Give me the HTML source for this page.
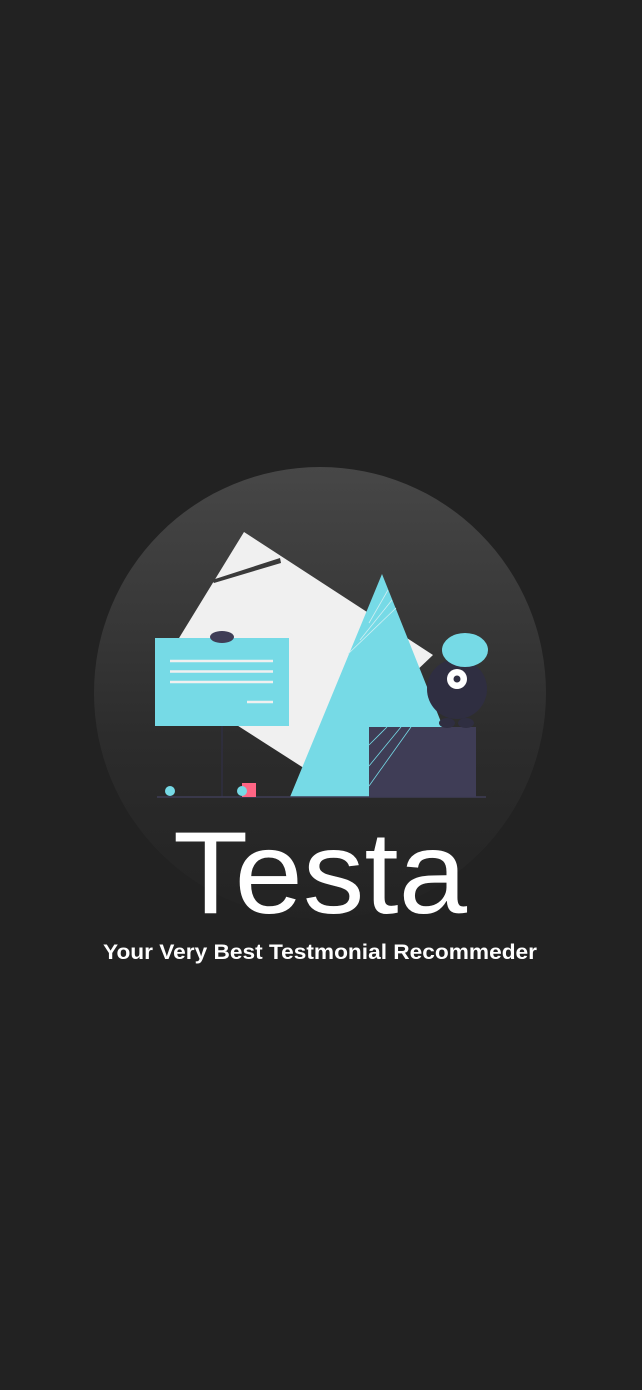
<!DOCTYPE html>
<html><head><meta charset="utf-8"><style>
html,body{margin:0;padding:0;background:#222222;}
body{width:642px;height:1390px;overflow:hidden;position:relative;}
svg{position:absolute;left:0;top:0;}
</style></head><body>
<svg width="642" height="1390" viewBox="0 0 642 1390" xmlns="http://www.w3.org/2000/svg">
<defs>
<linearGradient id="g" x1="0" y1="0" x2="0" y2="1">
<stop offset="0" stop-color="#474747"/>
<stop offset="0.6" stop-color="#2c2c2c"/>
<stop offset="1" stop-color="#232323"/>
</linearGradient>
</defs>
<circle cx="320" cy="693" r="226" fill="url(#g)"/>
<polygon points="244,532 433,655 310,772 157,674" fill="#f0f0f0"/>
<polygon points="212,580 280,558 281,563 214,583" fill="#3a3a3a"/>
<line x1="222" y1="726" x2="222" y2="797" stroke="#2f2e41" stroke-width="1.5"/>
<rect x="155" y="638" width="134" height="88" fill="#76dae6"/>
<ellipse cx="222" cy="637" rx="12" ry="6" fill="#3f3d56"/>
<g stroke="#f0f0f0" stroke-width="2.5">
<line x1="170" y1="661" x2="273" y2="661"/>
<line x1="170" y1="671.5" x2="273" y2="671.5"/>
<line x1="170" y1="682" x2="273" y2="682"/>
<line x1="247" y1="702" x2="273" y2="702"/>
</g>
<polygon points="382,574 290,797 370,797 370,727 443,727" fill="#76dae6"/>
<g stroke="#cfeff3" stroke-width="0.8">
<line x1="369" y1="623" x2="388" y2="590"/>
<line x1="360" y1="640" x2="392" y2="600"/>
<line x1="348" y1="654" x2="396" y2="608"/>
</g>
<rect x="369" y="727" width="107" height="70" fill="#3f3d56"/>
<g stroke="#76dae6" stroke-width="0.8">
<line x1="369" y1="745" x2="387" y2="727"/>
<line x1="369" y1="766" x2="401" y2="727"/>
<line x1="369" y1="786" x2="411" y2="727"/>
</g>
<ellipse cx="447" cy="723" rx="8" ry="5" fill="#2f2e41"/>
<ellipse cx="466" cy="723" rx="8" ry="5" fill="#2f2e41"/>
<circle cx="457" cy="689" r="30" fill="#2f2e41"/>
<ellipse cx="465" cy="650" rx="23" ry="17" fill="#76dae6"/>
<circle cx="457" cy="679" r="10" fill="#fff"/>
<circle cx="457" cy="679" r="3.5" fill="#2f2e41"/>
<line x1="157" y1="797" x2="486" y2="797" stroke="#3f3d56" stroke-width="1.5"/>
<rect x="242" y="783" width="14" height="14" fill="#ff6584"/>
<circle cx="170" cy="791" r="5" fill="#76dae6"/>
<circle cx="242" cy="791" r="5" fill="#76dae6"/>
<text x="320" y="913" text-anchor="middle" font-family="Liberation Sans, sans-serif" font-size="117" fill="#fff" textLength="294" lengthAdjust="spacingAndGlyphs">Testa</text>
<text x="320" y="959" text-anchor="middle" font-family="Liberation Sans, sans-serif" font-weight="bold" font-size="21" fill="#fff" textLength="434" lengthAdjust="spacingAndGlyphs">Your Very Best Testmonial Recommeder</text>
</svg>
</body></html>
